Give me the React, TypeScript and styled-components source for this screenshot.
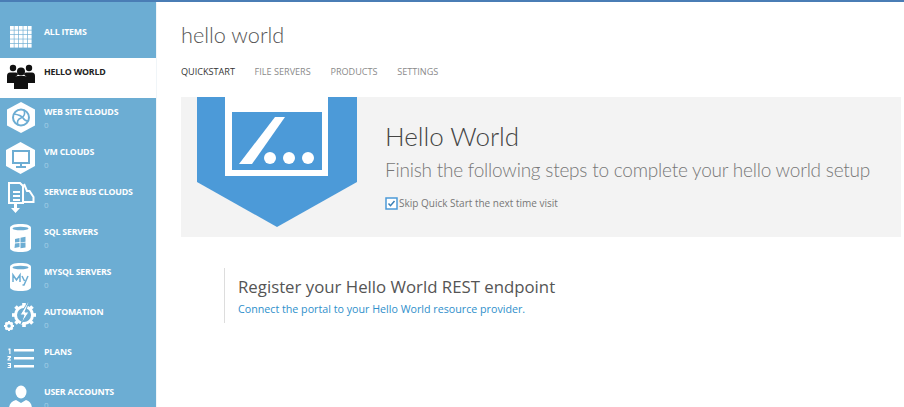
import React from "react";
import styled, { createGlobalStyle } from "styled-components";

const Global = createGlobalStyle`
  html, body { margin: 0; padding: 0; background: #fff; height: 100%; overflow: hidden; }
  #root { height: 100%; }
  * { box-sizing: border-box; }
`;

const FONT = `"Open Sans", "Noto Sans", "Liberation Sans", sans-serif`;
const LIGHT = `Lato, "Open Sans", "Liberation Sans", sans-serif`;

const Page = styled.div`
  width: 904px;
  height: 407px;
  display: flex;
  flex-direction: column;
  overflow: hidden;
  font-family: ${FONT};
  border-top: 2px solid #4a7db5;
`;
const Body = styled.div`
  flex: 1;
  min-height: 0;
  display: flex;
`;
const Sidebar = styled.nav`
  width: 157px;
  flex: none;
  padding-top: 16px;
  background: #6cadd3;
  border-right: 1px solid #f0f5f8;
  overflow: hidden;
`;
const Row = styled.div<{ $active?: boolean }>`
  height: 40px;
  display: flex;
  background: ${(p) => (p.$active ? "#fff" : "transparent")};
  color: ${(p) => (p.$active ? "#222" : "#fff")};
`;
const RowIcon = styled.svg`
  width: 44px;
  height: 40px;
  flex: none;
  display: block;
`;
const RowText = styled.div`
  padding-top: 7px;
  display: flex;
  flex-direction: column;
`;
const RowLabel = styled.span`
  font-size: 8.8px;
  line-height: 14px;
  font-weight: 700;
  letter-spacing: -0.2px;
  white-space: nowrap;
`;
const RowCount = styled.span`
  font-size: 8px;
  line-height: 11px;
  color: #a3cde6;
`;
const Main = styled.main`
  flex: 1;
  min-width: 0;
  padding: 19px 3px 0 24px;
`;
const Title = styled.h1`
  margin: 0;
  font-family: ${LIGHT};
  font-size: 21.7px;
  line-height: 28px;
  font-weight: 300;
  color: #555;
`;
const Tabs = styled.div`
  display: flex;
  gap: 19.7px;
  margin-top: 16px;
  height: 32px;
`;
const Tab = styled.span<{ $active?: boolean }>`
  font-size: 9.1px;
  line-height: 14px;
  color: ${(p) => (p.$active ? "#333" : "#8a8a8a")};
`;
const Banner = styled.section`
  height: 140px;
  background: #f3f3f3;
  display: flex;
  padding-left: 15px;
  gap: 28px;
  overflow: hidden;
`;
const Shield = styled.svg`
  width: 161px;
  height: 131px;
  flex: none;
  display: block;
`;
const BannerText = styled.div`
  padding-top: 21px;
  display: flex;
  flex-direction: column;
`;
const BannerTitle = styled.h2`
  margin: 0;
  font-family: ${LIGHT};
  font-size: 26px;
  line-height: 36px;
  font-weight: 300;
  color: #444;
`;
const BannerSub = styled.p`
  margin: 2px 0 0;
  font-family: ${LIGHT};
  font-size: 19px;
  line-height: 28px;
  letter-spacing: -0.22px;
  font-weight: 300;
  color: #777;
  white-space: nowrap;
`;
const Check = styled.label`
  margin-top: 12px;
  display: flex;
  align-items: center;
  gap: 1px;
  font-size: 10px;
  line-height: 14px;
  color: #777;
`;
const Box = styled.svg`
  width: 13px;
  height: 13px;
  flex: none;
`;
const Step = styled.section`
  margin: 31px 0 0 43px;
  height: 55px;
  border-left: 1px solid #ddd;
  padding: 7px 0 0 13px;
`;
const StepTitle = styled.h3`
  margin: 0;
  font-size: 16.8px;
  line-height: 24px;
  font-weight: 400;
  color: #555;
  white-space: nowrap;
`;
const StepLink = styled.a`
  display: block;
  margin-top: 3px;
  font-size: 10.7px;
  line-height: 14px;
  color: #2f8fcb;
`;

const W = "#fff";

const Grid = () => {
  const cells: React.ReactNode[] = [];
  for (let r = 0; r < 5; r++)
    for (let c = 0; c < 5; c++)
      cells.push(<rect key={`${r}-${c}`} x={10 + c * 4.45} y={8 + r * 4.45} width={3.8} height={3.8} fill={W} />);
  return <>{cells}</>;
};

const People = () => (
  <g fill="#111">
    <circle cx="13" cy="10" r="3.2" />
    <circle cx="29" cy="10" r="3.2" />
    <path d="M7 25v-7q0-3.500 3-3.500h6q2 0 2 2l-3 3v5.500zM35 25v-7q0-3.500-3-3.500h-6q-2 0-2 2l3 3v5.500z" />
    <circle cx="21" cy="13.500" r="4" />
    <path d="M14 31v-9q0-4 4-4h6q4 0 4 4v9z" />
  </g>
);

const WebIcon = () => (
  <g>
    <path d="M21 4l14 7.500v16l-14 7.500-14-7.500v-16z" fill={W} />
    <circle cx="21" cy="19.500" r="8" fill="none" stroke="#6cadd3" strokeWidth="2" />
    <path d="M14 16q7 1 9 4t5 3M18 27q-2-5 3-7t3-8" fill="none" stroke="#6cadd3" strokeWidth="1.600" />
  </g>
);

const VmIcon = () => (
  <g>
    <path d="M20.500 4l14.500 8v16l-14.500 8-14.500-8v-16z" fill={W} />
    <rect x="13" y="13" width="16" height="12" fill="none" stroke="#6cadd3" strokeWidth="2" />
    <path d="M21 25v3M16 29h10" stroke="#6cadd3" strokeWidth="2" />
  </g>
);

const BusIcon = () => (
  <g>
    <path d="M24 6l3 7h2.500l4 6v5H24" fill="none" stroke={W} strokeWidth="2" />
    <path d="M9 5h11l3 3v17h-14z" fill="none" stroke={W} strokeWidth="2" />
    <path d="M13 13h7v2h-7zM13 17h7v2h-7zM13 21h7v2h-7z" fill={W} />
    <path d="M14 25h3v5h3l-4.500 5-4.500-5h3z" fill={W} />
  </g>
);

const SqlIcon = () => (
  <g>
    <path d="M10 10c0-2.500 4-4 10.500-4s10.500 1.500 10.500 4v20c0 2.500-4 4-10.500 4S10 32.500 10 30z" fill={W} />
    <ellipse cx="20.500" cy="10.500" rx="8" ry="1.800" fill="#6cadd3" />
    <path d="M15 21l4.500-1v4l-4.500 .6zM20.500 19.800l5-1v5l-5 .6zM15 25.500l4.500-.4v4l-5 .8zM20.500 25l5-.5v5l-5 .8z" fill="#6cadd3" />
  </g>
);

const MyIcon = () => (
  <g>
    <path d="M10 9c0-2.500 4-4 10.500-4s10.500 1.500 10.500 4v20c0 2.500-4 4-10.500 4S10 31.500 10 29z" fill={W} />
    <ellipse cx="20.500" cy="9.500" rx="8" ry="1.800" fill="#6cadd3" />
    <path d="M13 24v-7l3.500 5 3.500-5v7M22 18l2.500 5M28 18l-4 9h-1.500" fill="none" stroke="#6cadd3" strokeWidth="1.500" />
  </g>
);

const AutoIcon = () => {
  const teeth = Array.from({ length: 8 }, (_, i) => i * 45);
  return (
    <g>
      <circle cx="24" cy="17" r="8.500" fill="none" stroke={W} strokeWidth="3" />
      {teeth.map((a) => (
        <rect key={a} x="22.200" y="5" width="3.600" height="3.500" fill={W} transform={`rotate(${a} 24 17)`} />
      ))}
      <path d="M28 4l-8 13h4l-3 9 8-12h-4l4-10z" fill={W} stroke="#6cadd3" strokeWidth="1" />
      <circle cx="9" cy="28" r="3" fill="none" stroke={W} strokeWidth="2.500" />
      {teeth.map((a) => (
        <rect key={a} x="8" y="23" width="2" height="2.500" fill={W} transform={`rotate(${a} 9 28)`} />
      ))}
    </g>
  );
};

const PlansIcon = () => (
  <g fill={W}>
    <rect x="14" y="11" width="20" height="2.500" />
    <rect x="14" y="19" width="20" height="2.500" />
    <rect x="14" y="27" width="20" height="2.500" />
    <path d="M8.500 10.500h2v5.500h-1.200v-4l-.8.400z" />
    <path d="M7.500 18h3.500v1.500l-2 2h2v1h-3.500v-1.200l2-2.100h-2z" />
    <path d="M7.500 25h3.500v5h-3.500v-1h2.300v-1h-1.600v-.9h1.600v-1.100h-2.300z" />
  </g>
);

const UserIcon = () => (
  <g fill={W}>
    <ellipse cx="21" cy="14" rx="5.500" ry="6.500" />
    <path d="M9 40v-9q0-7 7-9l5 3 5-3q6 2 6 9v9z" />
  </g>
);

const items: { label: string; count?: boolean; active?: boolean; icon: React.ReactNode }[] = [
  { label: "ALL ITEMS", icon: <Grid /> },
  { label: "HELLO WORLD", active: true, icon: <People /> },
  { label: "WEB SITE CLOUDS", count: true, icon: <WebIcon /> },
  { label: "VM CLOUDS", count: true, icon: <VmIcon /> },
  { label: "SERVICE BUS CLOUDS", count: true, icon: <BusIcon /> },
  { label: "SQL SERVERS", count: true, icon: <SqlIcon /> },
  { label: "MYSQL SERVERS", count: true, icon: <MyIcon /> },
  { label: "AUTOMATION", count: true, icon: <AutoIcon /> },
  { label: "PLANS", count: true, icon: <PlansIcon /> },
  { label: "USER ACCOUNTS", count: true, icon: <UserIcon /> },
];

export default function App() {
  return (
    <Page>
      <Global />
      <Body>
        <Sidebar>
          {items.map((it) => (
            <Row key={it.label} $active={it.active}>
              <RowIcon viewBox="0 0 44 40">{it.icon}</RowIcon>
              <RowText>
                <RowLabel>{it.label}</RowLabel>
                {it.count && <RowCount>0</RowCount>}
              </RowText>
            </Row>
          ))}
        </Sidebar>
        <Main>
          <Title>hello world</Title>
          <Tabs>
            <Tab $active>QUICKSTART</Tab>
            <Tab>FILE SERVERS</Tab>
            <Tab>PRODUCTS</Tab>
            <Tab>SETTINGS</Tab>
          </Tabs>
          <Banner>
            <Shield viewBox="0 0 161 131">
              <path d="M1 0H161V85L81 130 1 85z" fill="#4c9ad8" />
              <rect x="29" y="0" width="103" height="79" fill="#fff" />
              <rect x="36" y="15" width="90" height="58" fill="#4c9ad8" />
              <path d="M79 20h10L56 67H43z" fill="#fff" />
              <circle cx="74" cy="61" r="6" fill="#fff" />
              <circle cx="93" cy="61" r="6" fill="#fff" />
              <circle cx="112" cy="61" r="6" fill="#fff" />
            </Shield>
            <BannerText>
              <BannerTitle>Hello World</BannerTitle>
              <BannerSub>Finish the following steps to complete your hello world setup</BannerSub>
              <Check>
                <Box viewBox="0 0 13 13">
                  <rect x="1" y="1" width="11" height="11" fill="#fff" stroke="#4c9ad8" strokeWidth="1.500" />
                  <path d="M3.500 6.500l2 2.200 4-4.700" fill="none" stroke="#3a7fb5" strokeWidth="1.500" />
                </Box>
                Skip Quick Start the next time visit
              </Check>
            </BannerText>
          </Banner>
          <Step>
            <StepTitle>Register your Hello World REST endpoint</StepTitle>
            <StepLink>Connect the portal to your Hello World resource provider.</StepLink>
          </Step>
        </Main>
      </Body>
    </Page>
  );
}
